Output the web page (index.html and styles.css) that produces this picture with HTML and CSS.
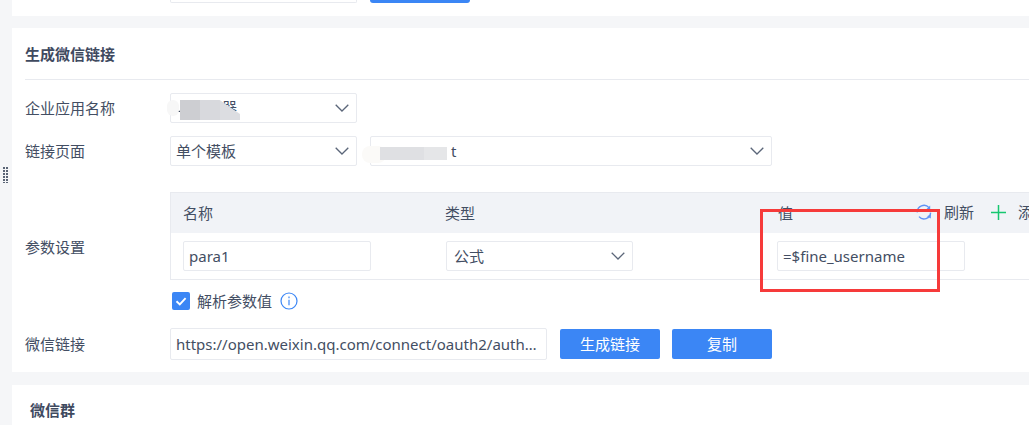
FILE: index.html
```html
<!DOCTYPE html>
<html lang="zh">
<head>
<meta charset="utf-8">
<title>生成微信链接</title>
<link rel="stylesheet" href="styles.css">
</head>
<body>
<div class="page">
  <aside class="rail"><span class="grip"></span></aside>
  <main class="main">
    <section class="card card-top">
      <div class="stub-input"></div>
      <div class="stub-btn"></div>
    </section>

    <section class="card card-link">
      <h2 class="title">生成微信链接</h2>
      <div class="rule"></div>

      <div class="row row-first">
        <label class="label">企业应用名称</label>
        <div class="select w187">
          <span class="smear smear-a"></span>
          <span class="val val-a">一</span>
          <span class="tail">器</span>
          <span class="blur blur-a"></span>
          <svg class="chev" viewBox="0 0 14 8"><path d="M.7.7 7 7l6.3-6.3"/></svg>
        </div>
      </div>

      <div class="row row-second">
        <label class="label">链接页面</label>
        <div class="select w187">
          <span class="val">单个模板</span>
          <svg class="chev" viewBox="0 0 14 8"><path d="M.7.7 7 7l6.3-6.3"/></svg>
        </div>
        <div class="select w402">
          <span class="smear smear-b"></span>
          <span class="val val-end">t</span>
          <span class="blur blur-b"></span>
          <svg class="chev" viewBox="0 0 14 8"><path d="M.7.7 7 7l6.3-6.3"/></svg>
        </div>
      </div>

      <div class="row row-params">
        <label class="label label-params">参数设置</label>
        <div class="table">
          <div class="thead">
            <span class="th th-name">名称</span>
            <span class="th th-type">类型</span>
            <span class="th th-value">值</span>
            <span class="actions">
              <svg class="ico-refresh" viewBox="0 0 16 16"><path d="M1.4 8.4A6.6 6.6 0 0 1 13 3.6"/><path d="M14.6 8.6A6.6 6.6 0 0 1 3 12.6"/><path class="fill" d="M14.2 1.4v4.4H9.8z"/><path class="fill" d="M11 12.2l3.8-1.6v4z"/></svg>
              <span class="act">刷新</span>
              <svg class="ico-plus" viewBox="0 0 15 15"><path d="M7.5 0v15M0 7.5h15"/></svg>
              <span class="act">添加</span>
            </span>
          </div>
          <div class="tbody">
            <div class="input w188">para1</div>
            <div class="select w187 sel-type">
              <span class="val val-type">公式</span>
              <svg class="chev" viewBox="0 0 14 8"><path d="M.7.7 7 7l6.3-6.3"/></svg>
            </div>
            <div class="input w188 in-value">=$fine_username</div>
          </div>
        </div>
      </div>

      <div class="row row-check">
        <span class="check"><svg viewBox="0 0 18 18"><path d="M4.5 9.2 7.8 12.4 13.6 6.2"/></svg></span>
        <span class="check-label">解析参数值</span>
        <svg class="ico-info" viewBox="0 0 18 18"><circle cx="9" cy="9" r="8"/><path d="M9 7.8v5.4"/><path d="M9 4.6v1.6"/></svg>
      </div>

      <div class="row row-url">
        <label class="label">微信链接</label>
        <div class="input url">https://open.weixin.qq.com/connect/oauth2/authorize?appid=wx</div>
        <button class="btn btn-gen">生成链接</button>
        <button class="btn btn-copy">复制</button>
      </div>
    </section>

    <section class="card card-group">
      <h2 class="title title-group">微信群</h2>
    </section>
  </main>
</div>
<div class="redbox"></div>
</body>
</html>
```

FILE: styles.css
```css
* { box-sizing: border-box; }
html, body { margin: 0; height: 100%; overflow: hidden; }
body {
  background: #f5f6f8;
  color: #434e63;
  font: 15px/20px "Noto Sans", "Noto Sans CJK SC", sans-serif;
  position: relative;
}
.page { display: flex; width: 1029px; height: 425px; overflow: hidden; }
.rail { width: 12px; flex: none; display: flex; align-items: flex-start; padding: 167px 0 0 3px; }
.grip {
  width: 6px; height: 16px;
  background-image: radial-gradient(circle at 1px 1px, #5a6475 1px, transparent 1px);
  background-size: 3px 3px;
}
.main { flex: 1; min-width: 0; display: flex; flex-direction: column; gap: 12px; }
.card { background: #fff; flex: none; width: 1017px; }

.card-top { height: 16px; display: flex; align-items: flex-end; padding: 0 0 13px 158px; gap: 13px; }
.stub-input { width: 187px; height: 10px; border: 1px solid #e8eaef; border-top: 0; border-radius: 0 0 2px 2px; margin-top: -7px; }
.stub-btn { width: 100px; height: 10px; background: #3b86f5; border-radius: 0 0 3px 3px; margin-top: -7px; }

.card-link { height: 344px; padding: 0 0 0 13px; }
.title { margin: 0; font-size: 15px; font-weight: 700; color: #3f4a5f; line-height: 20px; padding-top: 16px; }
.rule { height: 1px; background: #e8eaef; margin-top: 15px; }

.row { display: flex; align-items: center; }
.label { width: 145px; flex: none; }
.label-params { margin-top: 22px; }
.row-first { margin-top: 13px; }
.row-second { margin-top: 13px; gap: 13px; }
.row-second .label { margin-right: -13px; }
.row-params { margin-top: 26px; }
.row-check { margin-top: 12px; padding-left: 147px; height: 18px; }
.row-url { margin-top: 18px; }

.select, .input {
  height: 30px; background: #fff; border: 1px solid #e8eaef; border-radius: 2px;
  display: flex; align-items: center; padding: 0 5px; flex: none; position: relative;
}
.w187 { width: 187px; }
.w188 { width: 188px; }
.w402 { width: 402px; }
.chev { width: 14px; height: 8px; position: absolute; right: 7px; top: 10px; fill: none; stroke: #5b6679; stroke-width: 1.3; }
.val-a { margin-top: 6px; }
.val-end { position: absolute; left: 80px; }
.val-type { padding-left: 2px; }

.tail { position: absolute; left: 51px; top: 3px; }
.smear { position: absolute; display: block; background: #f7f7f7; border-radius: 8px; }
.smear-a { left: -4px; top: 6px; width: 12px; height: 16px; }
.smear-b { left: -9px; top: 9px; width: 24px; height: 17px; background: #fbfaf8; }
.blur { position: absolute; display: block; }
.blur-a {
  left: 9px; top: 6px; width: 60px; height: 20px;
  background: linear-gradient(90deg, #cdced2 0, #cdced2 33.3%, #d8d9dd 33.4%, #d8d9dd 66.6%, #dcdde1 66.7%);
  clip-path: polygon(0 0, 66% 0, 100% 70%, 100% 100%, 0 100%);
}
.blur-b {
  left: 9px; top: 10px; width: 67px; height: 13px;
  background: linear-gradient(90deg, #dfe0e3 0, #dfe0e3 65%, #e5e6e8 65%);
}

.table { width: 859px; flex: none; border: 1px solid #e8eaef; border-right: 0; height: 88px; }
.thead { height: 40px; background: #f1f3f7; display: flex; align-items: center; position: relative; padding: 0 0 1px 12px; }
.th-name { width: 262px; }
.th-type { width: 333px; }
.th-value { width: 100px; }
.actions { position: absolute; left: 745px; top: 9px; display: flex; align-items: center; white-space: nowrap; }
.ico-refresh { width: 16px; height: 16px; fill: none; stroke: #5f92f5; stroke-width: 1.4; }
.ico-refresh .fill { fill: #5f92f5; stroke: none; }
.ico-refresh + .act { margin-left: 12px; }
.ico-plus { width: 15px; height: 15px; margin: 0 12px 0 17px; fill: none; stroke: #16c76f; stroke-width: 1.5; }
.tbody { height: 46px; display: flex; align-items: flex-start; padding: 8px 0 0 12px; }
.sel-type { margin-left: 75px; }
.in-value { margin-left: 144px; }

.check { width: 18px; height: 18px; background: #3b86f5; border-radius: 2px; flex: none; }
.check svg { display: block; width: 18px; height: 18px; fill: none; stroke: #fff; stroke-width: 1.9; }
.check-label { margin-left: 7px; }
.ico-info { width: 18px; height: 18px; margin-left: 8px; fill: none; stroke: #3b86f5; stroke-width: 1.2; }

.url { width: 377px; height: 32px; display: block; line-height: 30px; white-space: nowrap; overflow: hidden; text-overflow: ellipsis; }
.btn { height: 30px; width: 100px; border: 0; border-radius: 2px; background: #3b86f5; color: #fff; font: inherit; padding: 0; flex: none; }
.btn-gen { margin-left: 13px; }
.btn-copy { margin-left: 12px; }

.card-group { height: 40px; padding-left: 18px; margin-top: 1px; }
.title-group { padding-top: 15px; }

.redbox { position: absolute; left: 760px; top: 209px; width: 180px; height: 83px; border: 3px solid #f63a3a; }
```
